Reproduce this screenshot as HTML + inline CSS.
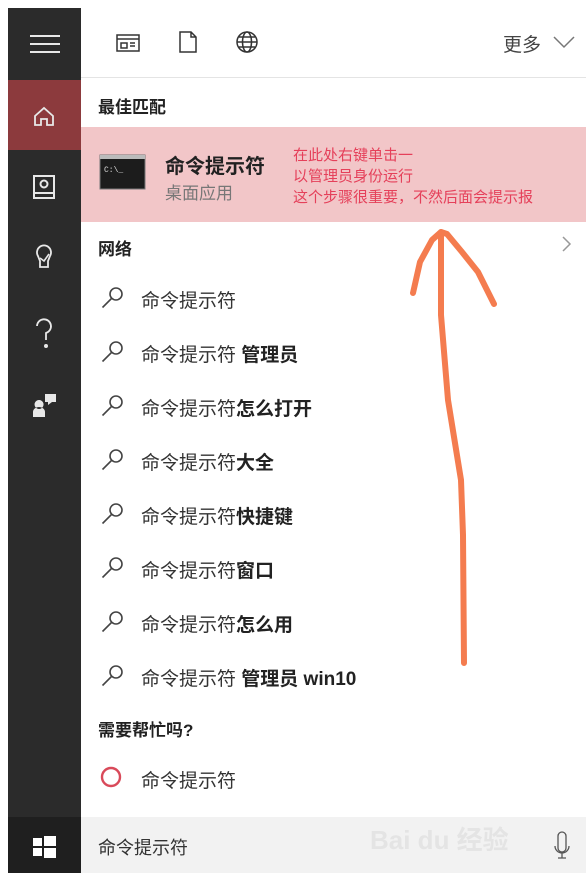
<!DOCTYPE html>
<html><head><meta charset="utf-8"><style>
*{margin:0;padding:0;box-sizing:border-box}
body{width:586px;height:881px;background:#fff;position:relative;overflow:hidden;font-family:"Liberation Sans","Noto Sans CJK SC",sans-serif;color:#222}
.abs{position:absolute}
.side{left:8px;top:8px;width:73px;height:865px;background:#2b2b2b}
.t{position:absolute;white-space:nowrap}
.item{font-size:19px;left:141px;color:#333}
.item b{font-weight:bold;color:#222}
</style></head><body>
<div class="abs side"></div>
<div class="abs" style="left:8px;top:80px;width:73px;height:70px;background:#8c3a3d"></div>
<div class="abs" style="left:8px;top:817px;width:73px;height:56px;background:#1f1f1f"></div>
<div class="abs" style="left:81px;top:817px;width:505px;height:56px;background:#f2f2f2"></div>
<div class="abs" style="left:81px;top:77px;width:505px;height:1px;background:#e4e4e4"></div>
<div class="abs" style="left:81px;top:127px;width:505px;height:95px;background:#f2c6c8"></div>
<svg class="abs" style="left:0;top:0" width="586" height="881">
<g stroke="#e8e8e8" stroke-width="2" fill="none">
<path d="M30 36h30M30 44h30M30 52h30"/>
<path d="M35 125v-9l9-8 9 8v9h-6v-6h-6v6z" stroke-width="1.8"/>
<rect x="34" y="176" width="20" height="22"/><circle cx="44" cy="184" r="3.5"/><path d="M34 193h20"/>
<path d="M38 256a7 7 0 1 1 12 0l-2 5v6h-8v-6z" stroke-width="1.8"/><path d="M40 258l4 3 5-7" stroke-width="1.6"/>
<path d="M37 326a7 7 0 1 1 9 7v7" stroke-width="1.8"/><circle cx="46" cy="346" r="1" fill="#e8e8e8"/>
</g>
<path d="M33 417v-5a6 5 0 0 1 12 0v5z M39 400a4.5 4.5 0 1 0 .1 0z" fill="#e8e8e8"/><path d="M45 394h11v8h-4l-4 3v-3h-3z" fill="#e8e8e8"/>
<path d="M33 838h9v8h-9zM44 836h12v10H44zM33 848h9v8h-9zM44 848h12v10H44z" fill="#fff"/>
<g stroke="#333" stroke-width="1.5" fill="none">
<rect x="117" y="35" width="22" height="16"/><path d="M117 39h22"/><rect x="121" y="43" width="6" height="5"/><path d="M130 43h5M130 46h5"/>
<path d="M180 32h11l5 5v15h-16z M191 32v5h5"/>
<circle cx="247" cy="42" r="10"/><ellipse cx="247" cy="42" rx="4.5" ry="10"/><path d="M237 42h20M239 37h16M239 47h16"/>
<path d="M554 37l10 10 10-10" stroke="#777"/>
<path d="M563 237l7 7-7 7" stroke="#999"/>
</g>
<path d="M558 836a4 4 0 0 1 8 0v12a4 4 0 0 1-8 0zM555 846a7 7 0 0 0 14 0M562 853v5M558 858h8" stroke="#555" stroke-width="1.3" fill="none"/>
<rect x="100" y="155" width="45" height="34" fill="#1c1c1c" stroke="#777" stroke-width="1"/>
<rect x="100" y="155" width="45" height="4" fill="#bbb"/>
<text x="104" y="172" font-size="8" fill="#ddd" font-family="Liberation Mono">C:\_</text>
<circle cx="111" cy="777" r="9" stroke="#d94a5a" stroke-width="2.4" fill="none"/>
<g stroke="#444" stroke-width="1.6" fill="none">
<g id="m"><circle cx="116" cy="294" r="6"/><path d="M111.5 298.5l-9 9"/></g>
<use href="#m" y="54"/><use href="#m" y="108"/><use href="#m" y="162"/><use href="#m" y="216"/><use href="#m" y="270"/><use href="#m" y="324"/><use href="#m" y="378"/>
</g>
<g stroke="#f47c4f" stroke-width="6" fill="none" stroke-linecap="round" stroke-linejoin="round">
<path d="M464 663L463 535L461 480L448 400L441 315L441 232"/>
<path d="M413 293L420 262L432 240L441 232L447 234L462 252L478 272L494 304"/>
</g>
</svg>
<div class="t" style="left:503px;top:30px;font-size:19px;color:#444">更多</div>
<div class="t" style="left:98px;top:93px;font-size:17px;font-weight:bold">最佳匹配</div>
<div class="t" style="left:165px;top:150px;font-size:20px;font-weight:bold">命令提示符</div>
<div class="t" style="left:165px;top:179px;font-size:17px;color:#777">桌面应用</div>
<div class="t" style="left:293px;top:145px;font-size:15px;line-height:21px;color:#e5405a">在此处右键单击一<br>以管理员身份运行<br>这个步骤很重要，不然后面会提示报</div>
<div class="t" style="left:98px;top:235px;font-size:17px;font-weight:bold">网络</div>
<div class="t item" style="top:286px">命令提示符</div>
<div class="t item" style="top:340px">命令提示符 <b>管理员</b></div>
<div class="t item" style="top:394px">命令提示符<b>怎么打开</b></div>
<div class="t item" style="top:448px">命令提示符<b>大全</b></div>
<div class="t item" style="top:502px">命令提示符<b>快捷键</b></div>
<div class="t item" style="top:556px">命令提示符<b>窗口</b></div>
<div class="t item" style="top:610px">命令提示符<b>怎么用</b></div>
<div class="t item" style="top:664px">命令提示符 <b>管理员 win10</b></div>
<div class="t" style="left:98px;top:716px;font-size:17px;font-weight:bold">需要帮忙吗?</div>
<div class="t item" style="top:766px">命令提示符</div>
<div class="t" style="left:98px;top:834px;font-size:18px;color:#333">命令提示符</div>
<div class="t" style="left:370px;top:820px;font-size:26px;color:#e4e4e4;font-weight:bold">Bai du 经验</div>
</body></html>
